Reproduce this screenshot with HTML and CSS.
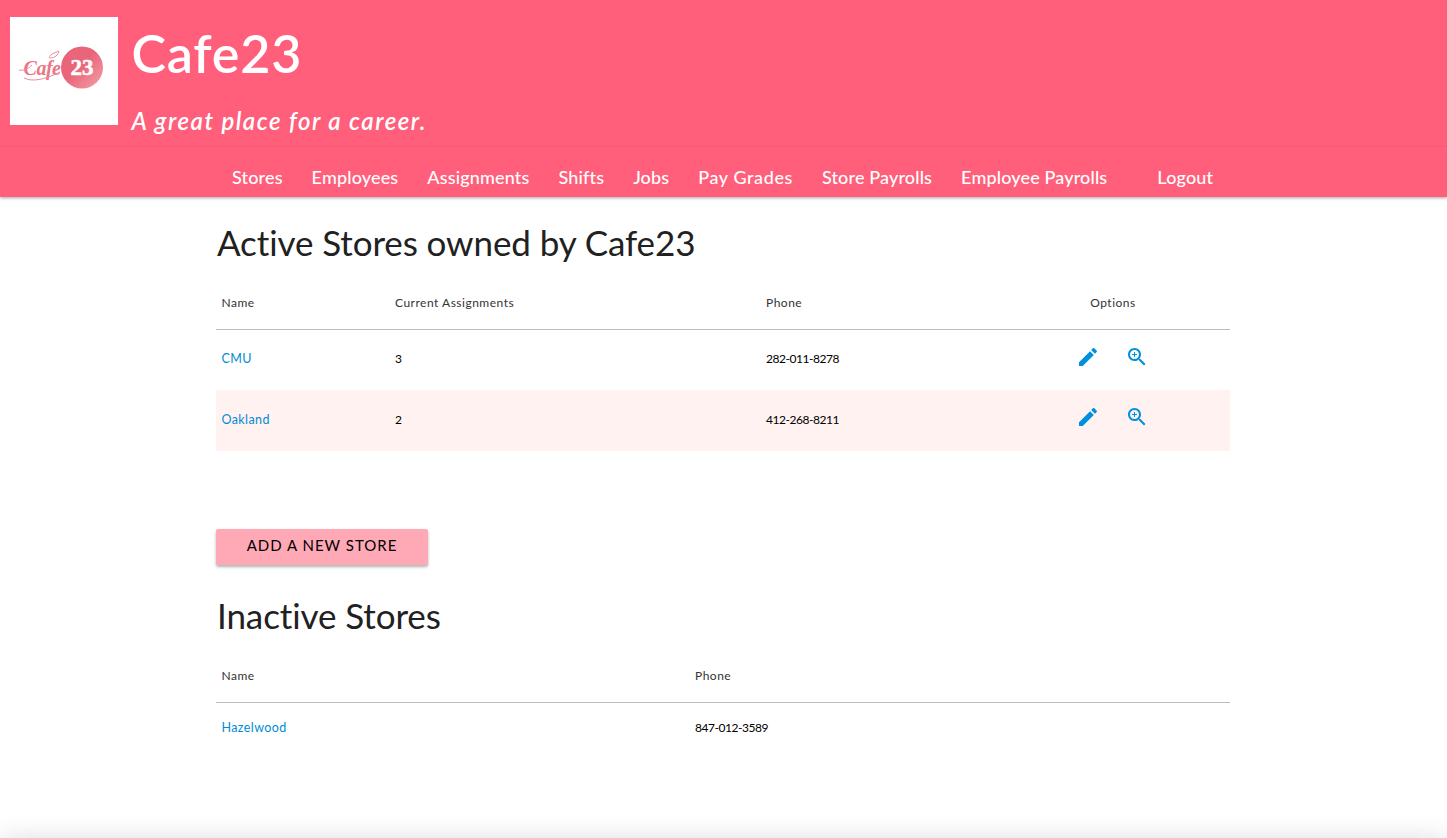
FILE: index.html
```html
<!DOCTYPE html>
<html>
	<head>
		<meta charset="UTF-8">
		<title>Cafe23</title>
		<link rel="stylesheet" href="styles.css">
	</head>
	<body>
		<header class="top">
			<div class="brand">
				<div class="logo">
					<svg width="108" height="108" viewBox="0 0 108 108">
						<defs>
							<linearGradient id="badge" x1="0" y1="0" x2="1" y2="1">
								<stop offset="0.45" stop-color="#E8657A"/>
								<stop offset="1" stop-color="#F6A0A8"/>
							</linearGradient>
						</defs>
						<circle cx="72" cy="50.500" r="21" fill="url(#badge)"/>
						<text x="72" y="57.500" class="logo-num">23</text>
						<text x="32" y="58" class="logo-script">Cafe</text>
						<path d="M9 53 C14 54 18 52 22 48 M39 41 C41 36 45 36 49 34 C48 38 45 41 40 41 M14 61 C22 65 34 63 50 55" fill="none" stroke="#EE8C9A" stroke-width="1"/>
					</svg>
				</div>
				<div class="brand-text">
					<h1>Cafe23</h1>
					<p>A great place for a career.</p>
				</div>
			</div>
			<nav class="menu">
				<a href="#">Stores</a>
				<a href="#">Employees</a>
				<a href="#">Assignments</a>
				<a href="#">Shifts</a>
				<a href="#">Jobs</a>
				<a href="#" class="wide">Pay Grades</a>
				<a href="#">Store Payrolls</a>
				<a href="#">Employee Payrolls</a>
				<a href="#" class="logout">Logout</a>
			</nav>
		</header>

		<main class="content">
			<h2 class="title-active">Active Stores owned by Cafe23</h2>
			<table class="stores">
				<thead>
					<tr>
						<th class="w-name">Name</th>
						<th class="w-assign">Current Assignments</th>
						<th class="w-phone">Phone</th>
						<th class="options">Options</th>
					</tr>
				</thead>
				<tbody>
					<tr>
						<td><a href="#">CMU</a></td>
						<td>3</td>
						<td class="num">282-011-8278</td>
						<td class="options">
							<a href="#" class="icon"><svg width="24" height="24" viewBox="0 0 24 24"><path d="M3 17.250V21h3.750L17.810 9.940l-3.750-3.750L3 17.250zM20.710 7.040c.39-.39.39-1.020 0-1.410l-2.340-2.340c-.39-.39-1.020-.39-1.410 0l-1.830 1.830 3.750 3.750 1.830-1.830z"/></svg></a>
							<a href="#" class="icon"><svg width="24" height="24" viewBox="0 0 24 24"><path d="M15.500 14h-.79l-.28-.27C15.410 12.590 16 11.110 16 9.500 16 5.910 13.090 3 9.500 3S3 5.910 3 9.500 5.910 16 9.500 16c1.610 0 3.090-.59 4.230-1.570l.27.28v.79l5 4.990L20.490 19l-4.990-5zm-6 0C7.010 14 5 11.990 5 9.500S7.010 5 9.500 5 14 7.010 14 9.500 11.990 14 9.500 14z"/><path d="M12 10h-2v2H9v-2H7V9h2V7h1v2h2v1z"/></svg></a>
						</td>
					</tr>
					<tr class="alt">
						<td><a href="#">Oakland</a></td>
						<td>2</td>
						<td class="num">412-268-8211</td>
						<td class="options">
							<a href="#" class="icon"><svg width="24" height="24" viewBox="0 0 24 24"><path d="M3 17.250V21h3.750L17.810 9.940l-3.750-3.750L3 17.250zM20.710 7.040c.39-.39.39-1.020 0-1.410l-2.340-2.340c-.39-.39-1.020-.39-1.410 0l-1.830 1.830 3.750 3.750 1.830-1.830z"/></svg></a>
							<a href="#" class="icon"><svg width="24" height="24" viewBox="0 0 24 24"><path d="M15.500 14h-.79l-.28-.27C15.410 12.590 16 11.110 16 9.500 16 5.910 13.090 3 9.500 3S3 5.910 3 9.500 5.910 16 9.500 16c1.610 0 3.090-.59 4.230-1.570l.27.28v.79l5 4.990L20.490 19l-4.990-5zm-6 0C7.010 14 5 11.990 5 9.500S7.010 5 9.500 5 14 7.010 14 9.500 11.990 14 9.500 14z"/><path d="M12 10h-2v2H9v-2H7V9h2V7h1v2h2v1z"/></svg></a>
						</td>
					</tr>
				</tbody>
			</table>

			<a href="#" class="btn">Add a new store</a>

			<h2 class="title-inactive">Inactive Stores</h2>
			<table class="stores inactive">
				<thead>
					<tr>
						<th class="w-half">Name</th>
						<th>Phone</th>
					</tr>
				</thead>
				<tbody>
					<tr>
						<td><a href="#">Hazelwood</a></td>
						<td class="num">847-012-3589</td>
					</tr>
				</tbody>
			</table>
		</main>

		<footer class="bottom"></footer>
	</body>
</html>
```

FILE: styles.css
```css
html, body {
	margin: 0;
	padding: 0;
}

body {
	min-height: 100vh;
	display: flex;
	flex-direction: column;
	background: #FFF;
	color: #000;
	font-family: "Lato", "Open Sans", sans-serif;
	overflow: hidden;
}

/* header */
.top {
	background: #FF5F7B;
	box-shadow: 0 1px 3px rgba(0, 0, 0, 0.35);
}

.brand {
	display: flex;
	height: 147px;
	padding: 17px 0 0 10px;
	box-sizing: border-box;
	border-bottom: 1px solid #F75A76;
}

.logo {
	width: 108px;
	height: 108px;
	background: #FFF;
}
.logo-num {
	font-family: "Liberation Serif", serif;
	font-weight: bold;
	font-size: 23px;
	fill: #FFF;
	stroke: #FFF;
	stroke-width: 0.5px;
	text-anchor: middle;
}
.logo-script {
	font-family: "Liberation Serif", serif;
	font-style: italic;
	font-weight: bold;
	font-size: 20px;
	letter-spacing: -0.5px;
	fill: #EA7687;
	text-anchor: middle;
}

.brand-text {
	margin-left: 13.500px;
	color: #FFF;
}
.brand-text h1 {
	margin: 0;
	font-size: 52px;
	font-weight: 600;
	letter-spacing: 0.8px;
	line-height: 72px;
}
.brand-text p {
	margin: 19px 0 0;
	font-size: 24px;
	font-style: italic;
	font-weight: 600;
	letter-spacing: 1.500px;
	line-height: 26px;
}

.menu {
	display: flex;
	height: 50px;
	padding: 10px 0 0 232px;
	box-sizing: border-box;
	align-items: center;
	gap: 29px;
}
.menu a {
	color: #FFF;
	font-size: 18px;
	font-weight: 500;
	letter-spacing: 0.15px;
	text-decoration: none;
}
.menu .wide {
	letter-spacing: 0.6px;
}
.menu .logout {
	margin-left: 21px;
}

/* page */
.content {
	width: 1014px;
	margin-left: 216px;
	flex: 1;
}

h2 {
	margin: 0;
	padding-left: 1px;
	color: #212121;
	font-size: 35px;
	font-weight: 400;
	letter-spacing: -0.1px;
	line-height: 44px;
}
.title-active {
	margin-top: 23px;
}
.title-inactive {
	margin-top: 28px;
}

.stores {
	width: 100%;
	border-collapse: collapse;
	table-layout: fixed;
	font-size: 12px;
}
h2 + .stores {
	margin-top: 13px;
}

.stores th {
	height: 52px;
	padding: 0 5.500px;
	box-sizing: border-box;
	font-weight: 400;
	letter-spacing: 0.5px;
	text-align: left;
	color: #333;
	border-bottom: 1px solid #BDBDBD;
}
.stores td {
	height: 61px;
	padding: 0 5.500px 3px;
	box-sizing: border-box;
}
.stores.inactive td {
	height: 54px;
}
.stores td a {
	color: #008CD6;
	font-size: 12.500px;
	letter-spacing: 0.4px;
	text-decoration: none;
}
.stores .num {
	letter-spacing: -0.45px;
}
.stores .alt {
	background: #FFF2F0;
}

.w-name { width: 173.500px; }
.w-assign { width: 371px; }
.w-phone { width: 235.500px; }
.w-half { width: 473.500px; }

.stores .options {
	text-align: center;
}
.stores td.options {
	padding-right: 6px;
}
.stores .alt td.options {
	padding-bottom: 5px;
}
.icon {
	display: inline-block;
	vertical-align: middle;
	margin: 0 11px 3px;
	height: 24px;
}
.icon svg {
	fill: #0090DE;
	display: block;
}

.btn {
	display: block;
	width: 212px;
	height: 36px;
	margin-top: 78px;
	background: #FFA9B6;
	border-radius: 2px;
	box-shadow: 0 2px 3px rgba(0, 0, 0, 0.3);
	color: #000;
	font-size: 15px;
	letter-spacing: 1px;
	line-height: 32px;
	text-align: center;
	text-transform: uppercase;
	text-decoration: none;
}

.bottom {
	height: 0;
	margin: 0 40px;
	box-shadow: 0 40px 24px 40px rgba(0, 0, 0, 0.13);
}
```
